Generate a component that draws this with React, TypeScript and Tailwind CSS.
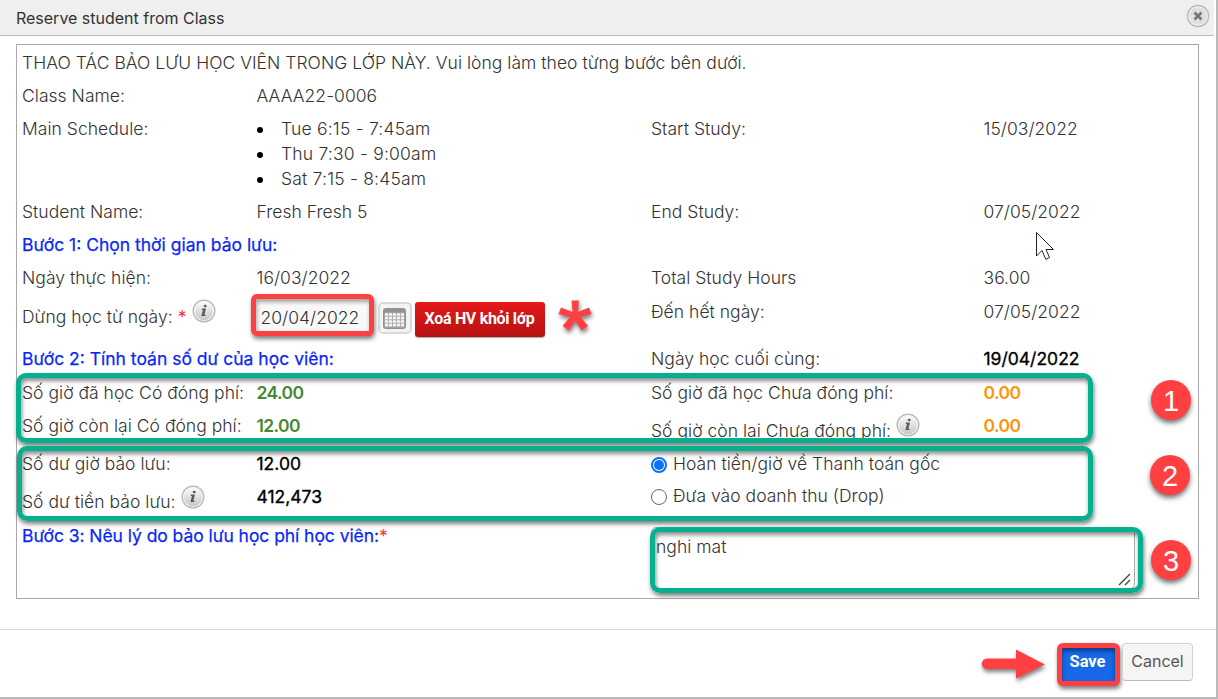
import type { ReactNode } from "react";

function InfoIcon() {
  return (
    <svg width="26" height="26" viewBox="0 0 26 26" className="shrink-0">
      <defs>
        <linearGradient id="info" x1="0" y1="0" x2="0" y2="1">
          <stop offset="0" stopColor="#fafafa" />
          <stop offset="1" stopColor="#c8c8c8" />
        </linearGradient>
      </defs>
      <circle cx="13" cy="13" r="11.5" fill="#b9b9b9" />
      <circle cx="13" cy="13" r="10.2" fill="#f4f4f4" />
      <circle cx="13" cy="13" r="9.2" fill="url(#info)" />
      <path d="M11 10.600h4l-1.700 6.200h1.400l-.3 1.300h-4l1.600-6.200h-1.300z" fill="#5a5a5a" />
      <ellipse cx="14.200" cy="8" rx="1.500" ry="1.300" fill="#5a5a5a" />
    </svg>
  );
}

function Row({ h, children }: { h: string; children: ReactNode }) {
  return <div className={`grid grid-cols-[234.5px_394.5px_332.5px_1fr] ${h}`}>{children}</div>;
}

function Step({ children }: { children: ReactNode }) {
  return <div className="col-span-2 text-[#0a28f5] font-normal tracking-[0px] [-webkit-text-stroke:0.25px]">{children}</div>;
}

function Value({ tone, children }: { tone: "green" | "orange"; children: ReactNode }) {
  const color = tone === "green" ? "text-[#468931]" : "text-[#ff9408]";
  return <span className={`font-semibold tracking-[-0.6px] ${color}`}>{children}</span>;
}

function Strong({ children }: { children: ReactNode }) {
  return <span className="font-normal tracking-[0px] text-black [-webkit-text-stroke:0.35px]">{children}</span>;
}

function Badge({ n, pos }: { n: number; pos: string }) {
  return (
    <div className={`absolute flex size-10 items-center justify-center rounded-full bg-[#ff4043] pt-0.5 font-['Liberation_Sans',sans-serif] text-[29px] leading-none font-normal tracking-normal text-white shadow-[0_3px_5px_rgba(0,0,0,0.55)] ${pos}`}>
      {n}
    </div>
  );
}

function Frame({ pos }: { pos: string }) {
  return (
    <div className={`pointer-events-none absolute rounded-[10px] border-[5px] border-[#06b08f] shadow-[1px_3px_4px_rgba(0,0,0,0.5),inset_1px_3px_4px_rgba(0,0,0,0.45)] ${pos}`} />
  );
}

export default function App() {
  return (
    <div className="relative flex h-[699px] w-[1218px] flex-col overflow-hidden border-r-2 border-b-2 border-[#b9b9b9] bg-white font-['Inter','Noto_Sans',sans-serif] text-[17.5px] leading-[25px] font-light tracking-[0.03px] text-[#333]">
      <header className="mr-0.5 flex h-9 shrink-0 items-center justify-between border-b border-[#bdbdbd] bg-[#efefef] pr-1 pl-4 text-[16px] font-normal tracking-[-0.01px] text-[#333]">
        <h1 className="pt-0.5">Reserve student from Class</h1>
        <svg width="24" height="24" viewBox="0 0 24 24" className="mb-1">
          <circle cx="12" cy="12" r="11.3" fill="#b9b9b9" />
          <circle cx="12" cy="12" r="10" fill="#ececec" />
          <circle cx="12" cy="12" r="8.5" fill="#dfdfdf" />
          <path d="M8.500 8.500l7 7M15.500 8.500l-7 7" stroke="#777" strokeWidth="2.7" />
        </svg>
      </header>

      <main className="mt-2 ml-4 h-[555px] w-[1183px] shrink-0 border border-[#a8a8a8] pt-[5px] pl-[5px]">
        <div className="h-[33px]">THAO TÁC BẢO LƯU HỌC VIÊN TRONG LỚP NÀY. Vui lòng làm theo từng bước bên dưới.</div>
        <Row h="h-[33px]">
          <span>Class Name:</span>
          <span>AAAA22-0006</span>
        </Row>
        <Row h="h-[83px]">
          <span>Main Schedule:</span>
          <ul className="tracking-[0.2px]">
            {["Tue 6:15 - 7:45am", "Thu 7:30 - 9:00am", "Sat 7:15 - 8:45am"].map((slot) => (
              <li key={slot} className="flex items-center">
                <span className="mt-0.5 mr-[18.5px] size-1.5 rounded-full bg-black" />
                {slot}
              </li>
            ))}
          </ul>
          <span>Start Study:</span>
          <span>15/03/2022</span>
        </Row>
        <Row h="h-[33px]">
          <span>Student Name:</span>
          <span>Fresh Fresh 5</span>
          <span>End Study:</span>
          <span>07/05/2022</span>
        </Row>
        <Row h="h-[33px]">
          <Step>Bước 1: Chọn thời gian bảo lưu:</Step>
        </Row>
        <Row h="h-[33px]">
          <span>Ngày thực hiện:</span>
          <span>16/03/2022</span>
          <span>Total Study Hours</span>
          <span>36.00</span>
        </Row>
        <Row h="h-[48px]">
          <div className="flex">
            <span className="pt-1.5">
              Dừng học từ ngày: <span className="font-normal text-[#f33]">*</span>
            </span>
            <span className="ml-[5px]">
              <InfoIcon />
            </span>
          </div>
          <div className="-mt-1 flex items-start">
            <div className="-ml-1.5 flex h-[42px] w-[123px] items-center rounded-md border-[5px] border-[#ff4043] bg-[#f9f9f9] pt-1 pl-[5px] shadow-[1px_3px_4px_rgba(0,0,0,0.5),inset_1px_3px_4px_rgba(0,0,0,0.35)]">
              20/04/2022
            </div>
            <svg width="34" height="32" viewBox="0 0 34 32" className="mt-2 ml-1">
              <rect x="1" y="1" width="32" height="30" rx="4" fill="#f3f3f3" stroke="#d0d0d0" strokeWidth="1.5" />
              <rect x="5" y="6" width="23" height="21" rx="3" fill="#929292" />
              <rect x="6.5" y="10.5" width="20" height="15" fill="#b0b0b0" />
              <path d="M7 12.500h19M7 16h19M7 19.500h19M7 23h19" stroke="#f5f5f5" strokeWidth="2.5" strokeDasharray="3 1" />
            </svg>
            <button className="mt-2 ml-[3px] h-[35px] w-[130px] rounded-[3px] bg-linear-to-b from-[#e61919] to-[#b61212] pb-0.5 font-['Roboto',sans-serif] text-[16px] font-bold tracking-[-0.02em] text-white shadow-[0_1px_1px_#aaa]">
              Xoá HV khỏi lớp
            </button>
            <svg width="40" height="42" viewBox="0 0 40 42" className="mt-1 ml-[10px] drop-shadow-[1px_3px_2px_rgba(0,0,0,0.5)]">
              <path d="M16.500 2.500H24L22.800 14L34 9.500L36.500 16L25.500 19L33 28L26.500 32.500L20.200 22.500L14 32.500L7.500 28L15 19L3.500 16L6 9.500L17.700 14z" fill="#ff4043" />
            </svg>
          </div>
          <span className="pt-px">Đến hết ngày:</span>
          <span className="pt-px">07/05/2022</span>
        </Row>
        <Row h="h-[34px]">
          <Step>Bước 2: Tính toán số dư của học viên:</Step>
          <span>Ngày học cuối cùng:</span>
          <Strong>19/04/2022</Strong>
        </Row>
        <Row h="h-[33px]">
          <span>Số giờ đã học Có đóng phí:</span>
          <Value tone="green">24.00</Value>
          <span>Số giờ đã học Chưa đóng phí:</span>
          <Value tone="orange">0.00</Value>
        </Row>
        <Row h="h-[38px]">
          <span>Số giờ còn lại Có đóng phí:</span>
          <Value tone="green">12.00</Value>
          <div className="flex">
            <span className="pt-[5px]">Số giờ còn lại Chưa đóng phí:</span>
            <span className="-mt-px ml-1">
              <InfoIcon />
            </span>
          </div>
          <Value tone="orange">0.00</Value>
        </Row>
        <Row h="h-[33px]">
          <span>Số dư giờ bảo lưu:</span>
          <Strong>12.00</Strong>
          <label className="col-span-2 flex">
            <span className="mt-[6px] mr-1.5 flex size-4 items-center justify-center rounded-full border-2 border-[#0a72f5]">
              <span className="size-[10px] rounded-full bg-[#0a72f5]" />
            </span>
            Hoàn tiền/giờ về Thanh toán gốc
          </label>
        </Row>
        <Row h="h-[39px]">
          <div className="flex">
            <span className="pt-[5px]">Số dư tiền bảo lưu:</span>
            <span className="ml-[5px]">
              <InfoIcon />
            </span>
          </div>
          <Strong>412,473</Strong>
          <label className="col-span-2 -mt-px flex">
            <span className="mt-[6px] mr-1.5 size-4 rounded-full border border-[#666]" />
            Đưa vào doanh thu (Drop)
          </label>
        </Row>
        <Row h="h-[72px]">
          <Step>
            <span className="tracking-[-0.06px]">Bước 3: Nêu lý do bảo lưu học phí học viên:</span>
            <span className="text-[#f33] [-webkit-text-stroke:0px]">*</span>
          </Step>
          <div className="relative mt-1 h-[62px] w-[484px] rounded-[5px] border border-[#aaa] pt-1.5 pl-1">
            nghi mat
            <svg width="14" height="14" viewBox="0 0 14 14" className="absolute right-0.5 bottom-0.5">
              <path d="M1 13L12 2M7 13l5-5" stroke="#444" strokeWidth="1.4" />
            </svg>
          </div>
        </Row>
      </main>

      <footer className="mt-[30px] flex flex-1 items-start justify-end border-t border-[#d8d8d8] pt-[13px] pr-[23px] text-[16px] tracking-normal">
        <svg width="72" height="40" viewBox="0 0 72 40" className="mt-0.5 mr-[7px] drop-shadow-[1px_3px_2px_rgba(0,0,0,0.5)]">
          <path d="M9 13.500H38V4.500L67 19.500L38 33.500V24H9a5 5 0 0 1 0-10.500z" fill="#ff4043" />
        </svg>
        <button className="h-[43px] w-[63px] rounded-md border-[5px] border-[#ff4043] bg-[#1769e8] pr-0.5 pb-1.5 font-['Roboto',sans-serif] text-[16.5px] font-bold text-white shadow-[1px_3px_4px_rgba(0,0,0,0.5),inset_0_3px_4px_rgba(0,0,0,0.45)]">
          Save
        </button>
        <button className="ml-0.5 h-[38px] w-[71px] rounded-[4px] border border-[#d2d2d2] border-b-[#bbb] bg-[#f5f5f5] pb-0.5 font-normal text-[#555]">
          Cancel
        </button>
      </footer>

      <Frame pos="left-4 top-[373px] h-[70px] w-[1077px]" />
      <Frame pos="left-[17px] top-[446px] h-[75px] w-[1076px]" />
      <Frame pos="left-[650px] top-[527px] h-[66px] w-[493px]" />
      <Badge n={1} pos="left-[1151px] top-[380px]" />
      <Badge n={2} pos="left-[1150px] top-[455px]" />
      <Badge n={3} pos="left-[1151px] top-[540px]" />
      <svg width="20" height="30" viewBox="0 0 20 30" className="absolute top-[231px] left-[1035px]">
        <path d="M1.500 1.500V25L7 19.500L10.800 28.300L14.500 26.600L11 18.500H18.500z" fill="#fff" stroke="#223" strokeWidth="1" />
      </svg>
    </div>
  );
}
